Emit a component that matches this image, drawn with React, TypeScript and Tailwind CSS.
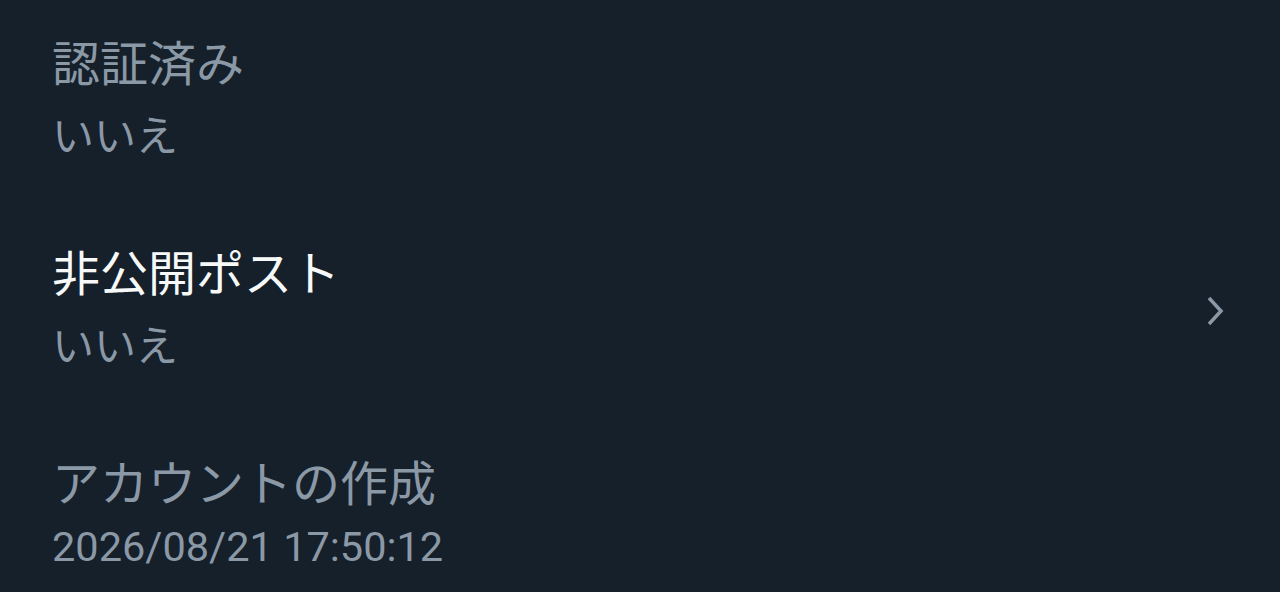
const jp = { fontFamily: '"Noto Sans CJK JP", sans-serif' };
const num = { fontFamily: 'Roboto, "Noto Sans CJK JP", sans-serif' };

interface IRowProps {
  title: string;
  value: string;
  strong?: boolean;
  link?: boolean;
  numeric?: boolean;
}

const InfoRow = ({ title, value, strong, link, numeric }: IRowProps) => {
  return (
    <div className="flex h-[210px] items-start pl-[52px] pr-[56px] pt-[31px]">
      <div className="flex-1">
        <p
          className={`text-[48px] leading-[58px] ${strong ? 'text-[#f7f9f9]' : 'text-[#8b98a5]'}`}
          style={jp}
        >
          {title}
        </p>
        <p
          className={`leading-[58px] text-[#8b98a5] ${numeric ? 'mt-[9px] text-[41.5px]' : 'mt-[15px] text-[42px]'}`}
          style={numeric ? num : jp}
        >
          {value}
        </p>
      </div>
      {link && (
        <div className="flex h-[140px] items-center">
          <svg width="18" height="30" viewBox="0 0 18 30" fill="none">
            <path d="M3 2 L15 15 L3 28" stroke="#8b98a5" strokeWidth="3.5" strokeLinejoin="miter" />
          </svg>
        </div>
      )}
    </div>
  );
};

export default function App() {
  return (
    <div className="h-[592px] w-full overflow-hidden bg-[#15202b]">
      <InfoRow title="認証済み" value="いいえ" />
      <InfoRow title="非公開ポスト" value="いいえ" strong link />
      <InfoRow title="アカウントの作成" value="2026/08/21 17:50:12" numeric />
    </div>
  );
}
